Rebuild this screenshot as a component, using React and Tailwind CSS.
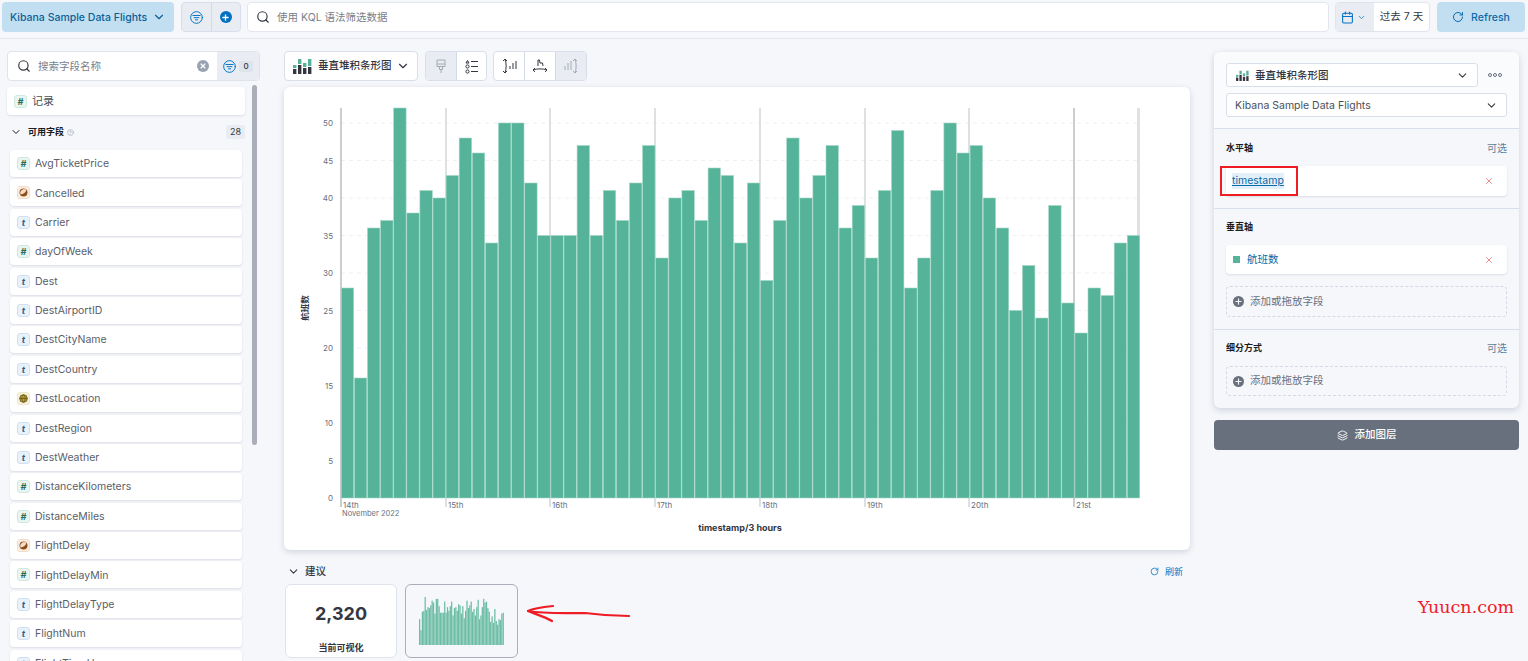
import React from 'react';
import { ChevronDown, Search, RotateCw, X, Layers, Calendar, Plus, HelpCircle } from 'lucide-react';

const CJK = 'font-["Inter","Noto_Sans_CJK_SC",sans-serif]';

const FIELDS = [
  ['AvgTicketPrice', 'n'], ['Cancelled', 'b'], ['Carrier', 't'], ['dayOfWeek', 'n'], ['Dest', 't'],
  ['DestAirportID', 't'], ['DestCityName', 't'], ['DestCountry', 't'], ['DestLocation', 'g'], ['DestRegion', 't'],
  ['DestWeather', 't'], ['DistanceKilometers', 'n'], ['DistanceMiles', 'n'], ['FlightDelay', 'b'],
  ['FlightDelayMin', 'n'], ['FlightDelayType', 't'], ['FlightNum', 't'], ['FlightTimeHour', 't'],
];

const BARS = [28, 16, 36, 37, 52, 38, 41, 40, 43, 48, 46, 34, 50, 50, 42, 35, 35, 35, 47, 35, 41, 37, 42, 47, 32, 40, 41, 37, 44, 43, 34, 42, 29, 37, 48, 40, 43, 47, 36, 39, 32, 41, 49, 28, 32, 41, 50, 46, 47, 40, 36, 25, 31, 24, 39, 26, 22, 28, 27, 34, 35];
const DAYS = ['14th', '15th', '16th', '17th', '18th', '19th', '20th', '21st'];
const DAY_X = [57, 162, 266, 371, 476, 581, 685, 790];
const TICKS = [0, 5, 10, 15, 20, 25, 30, 35, 40, 45, 50];

function FieldToken({ type }) {
  if (type === 'n') {
    return <span className="flex h-[13px] w-[13px] shrink-0 items-center justify-center rounded-[3px] border border-[#cfe9e0] bg-[#e8f5f1] text-[9px] font-bold italic leading-none text-[#2c6e5a]">#</span>;
  }
  if (type === 't') {
    return <span className="flex h-[13px] w-[13px] shrink-0 items-center justify-center rounded-[3px] border border-[#cfe0ef] bg-[#eaf2f9] text-[9px] font-bold italic leading-none text-[#2f5f8a]">t</span>;
  }
  if (type === 'b') {
    return (
      <span className="flex h-[13px] w-[13px] shrink-0 items-center justify-center rounded-[3px] border border-[#f6dcc6] bg-[#fbeee3]">
        <svg width="9" height="9" viewBox="0 0 9 9">
          <circle cx="4.5" cy="4.5" r="4" fill="#8f4f1c" />
          <path d="M1.5 6.5A4 4 0 0 1 7.5 1.8C7 4.5 4.5 6.2 1.5 6.5Z" fill="#f6dcc6" />
        </svg>
      </span>
    );
  }
  return (
    <span className="flex h-[13px] w-[13px] shrink-0 items-center justify-center rounded-[3px] border border-[#efe8c8] bg-[#f7f2dc]">
      <svg width="9" height="9" viewBox="0 0 9 9" fill="none" stroke="#6f5a12" strokeWidth="0.9">
        <circle cx="4.5" cy="4.5" r="3.8" fill="#b9a14a" />
        <path d="M0.7 4.5h7.6M4.5 0.7c-2.2 2.4-2.2 5.2 0 7.6M4.5 0.7c2.2 2.4 2.2 5.2 0 7.6" />
      </svg>
    </span>
  );
}

function FilterIcon({ size = 13, color = '#0071c2' }) {
  return (
    <svg width={size} height={size} viewBox="0 0 16 16" fill="none" stroke={color} strokeWidth="1.2" strokeLinecap="round">
      <circle cx="8" cy="8" r="7.2" />
      <path d="M3.5 5.5h9M5 8.2h6M6.6 10.9h2.8" />
    </svg>
  );
}

function BarStackIcon({ small }) {
  const s = small ? 'h-[11px] w-[13px]' : 'h-[16px] w-[19px]';
  return (
    <svg className={s} viewBox="0 0 19 16">
      <rect x="0" y="7" width="3.4" height="3" fill="#54b399" />
      <rect x="0" y="11" width="3.4" height="5" fill="#343741" />
      <rect x="5" y="1" width="3.4" height="5" fill="#54b399" />
      <rect x="5" y="7" width="3.4" height="9" fill="#343741" />
      <rect x="10" y="5" width="3.4" height="4" fill="#54b399" />
      <rect x="10" y="10" width="3.4" height="6" fill="#343741" />
      <rect x="15" y="1" width="3.4" height="7" fill="#54b399" />
      <rect x="15" y="9" width="3.4" height="7" fill="#343741" />
    </svg>
  );
}

function DropZone({ h }) {
  return (
    <div className={`flex ${h} items-center gap-[6px] rounded-[4px] border border-dashed border-[#d3dae6] px-[6px] text-[10.5px] text-[#69707d]`}>
      <span className="flex h-[11px] w-[11px] items-center justify-center rounded-full bg-[#69707d]">
        <Plus size={9} strokeWidth={3} className="text-[#f5f7fa]" />
      </span>
      添加或拖放字段
    </div>
  );
}

function SectionTitle({ children, optional }) {
  return (
    <div className="flex h-4 items-center justify-between">
      <span className="text-[9px] font-bold text-[#1a1c21]">{children}</span>
      {optional && <span className="text-[10px] text-[#5f7f98]">可选</span>}
    </div>
  );
}

function Chart() {
  return (
    <svg width="906" height="463" className="block">
      {TICKS.filter(t => t > 0).map(t => (
        <line key={t} x1="57" x2="856" y1={411 - t * 7.5} y2={411 - t * 7.5} stroke="#eef0f3" strokeDasharray="4 4" />
      ))}
      {DAY_X.map((x, i) => (
        <line key={x} x1={x} x2={x} y1="21" y2="420" stroke={i === 0 || i === 7 ? '#a9adb3' : '#c9cbd0'} strokeWidth="1.2" />
      ))}
      <rect x="853" y="21" width="3" height="390" fill="#e0e1e5" />
      {BARS.map((v, i) => (
        <rect key={i} x={57.3 + i * 13.1} y={411 - v * 7.5} width="12.4" height={v * 7.5} fill="#54b399" stroke="#a3d7c5" strokeWidth="0.6" />
      ))}
      <g className="text-[8px]" fill="#69707d" style={{ fontFamily: 'Inter, sans-serif' }}>
        {TICKS.map(t => (
          <text key={t} x="49" y={414 - t * 7.5} textAnchor="end">{t}</text>
        ))}
        {DAYS.map((d, i) => (
          <text key={d} x={DAY_X[i] + 2} y="421">{d}</text>
        ))}
        <text x="58" y="428.5" style={{ fontSize: '7.5px' }}>November 2022</text>
      </g>
      <text x="456" y="444" textAnchor="middle" fontSize="9" fontWeight="700" fill="#343741" style={{ fontFamily: 'Inter, sans-serif' }}>timestamp/3 hours</text>
      <text transform="translate(24 221) rotate(-90)" textAnchor="middle" fontSize="8.5" fontWeight="700" fill="#343741" style={{ fontFamily: 'Inter, "Noto Sans CJK SC", sans-serif' }}>航班数</text>
    </svg>
  );
}

function MiniChart() {
  return (
    <svg width="85" height="48" viewBox="0 0 61 52" preserveAspectRatio="none">
      {BARS.map((v, i) => (
        <rect key={i} x={i} y={52 - v} width="0.9" height={v} fill="#6bbda3" />
      ))}
    </svg>
  );
}

export default function App() {
  return (
    <div className={`relative h-[661px] w-[1528px] overflow-hidden bg-[#f6f7fb] ${CJK}`}>
      <header className="flex h-[39px] gap-[6px] border-b border-[#e3e6ef] pl-[2px] pr-[3px] pt-[2px]">
        <button className="mr-[1px] flex h-[30px] w-[172px] items-center justify-between whitespace-nowrap rounded-[4px] bg-[#c2dff2] pl-[8px] pr-[8px] text-[10.5px] font-medium text-[#0b5f97]">
          <span className="pt-[1px]">Kibana Sample Data Flights</span>
          <ChevronDown size={14} />
        </button>
        <div className="flex h-[30px] w-[60px] rounded-[4px] border border-[#d8deea] bg-[#e9edf3]">
          <span className="flex flex-1 items-center justify-center border-r border-[#d3dae6]"><FilterIcon /></span>
          <span className="flex flex-1 items-center justify-center">
            <span className="flex h-[12px] w-[12px] items-center justify-center rounded-full bg-[#0071c2]">
              <Plus size={9} strokeWidth={3.5} className="text-white" />
            </span>
          </span>
        </div>
        <div className="flex h-[30px] flex-1 items-center rounded-[4px] border border-[#e3e6ef] bg-white pl-[8px] text-[10.5px] text-[#7a808a]">
          <Search size={14} className="mr-[7px] text-[#343741]" />
          <span className="pt-[1px]">使用 KQL 语法筛选数据</span>
        </div>
        <div className="flex h-[30px] w-[95px] rounded-[4px] border border-[#e0e4ec] bg-white">
          <span className="flex w-[38px] items-center gap-[3px] rounded-l-[4px] bg-[#e9edf3] pl-[5px] text-[#0071c2]">
            <Calendar size={13} />
            <ChevronDown size={9} />
          </span>
          <span className="flex-1 self-center text-center text-[10.5px] text-[#343741]">过去 7 天</span>
        </div>
        <button className="ml-[1px] flex h-[30px] w-[88px] items-center justify-center gap-[7px] rounded-[4px] bg-[#c2dff2] text-[10.5px] font-medium text-[#0b6aa8]">
          <RotateCw size={12} />
          <span className="pt-[1px]">Refresh</span>
        </button>
      </header>

      <main className="flex">
        <aside className="relative w-[284px] shrink-0 pt-[12px]">
          <div className="ml-[7px] flex h-[30px] w-[253px] rounded-[4px] border border-[#dfe3ec] bg-white">
            <div className="flex flex-1 items-center pl-[9px] pr-[8px] text-[10.5px] text-[#7a808a]">
              <Search size={14} className="mr-[7px] text-[#343741]" />
              <span className="flex-1 pt-[1px]">搜索字段名称</span>
              <span className="flex h-[12px] w-[12px] items-center justify-center rounded-full bg-[#98a2b3]">
                <X size={8} strokeWidth={3.5} className="text-white" />
              </span>
            </div>
            <div className="flex w-[42px] items-center justify-center gap-[3px] rounded-r-[4px] bg-[#e9edf3]">
              <FilterIcon />
              <span className="rounded-[2px] bg-[#dfe4ec] px-[4px] text-[8px] font-medium leading-[11px] text-[#343741]">0</span>
            </div>
          </div>
          <div className="ml-[7px] mt-[6px] flex h-[28px] w-[238px] items-center gap-[5px] rounded-[4px] bg-white pl-[7px] text-[11px] text-[#4a4f58] shadow-[0_1px_2px_rgba(152,162,179,0.3)]">
            <FieldToken type="n" />
            记录
          </div>
          <div className="ml-[7px] mt-[10px] flex h-[14px] w-[238px] items-center pl-[3px] text-[9px] font-semibold text-[#1a1c21]">
            <ChevronDown size={12} className="mr-[6px]" />
            可用字段
            <HelpCircle size={7} className="ml-[3px] text-[#98a2b3]" />
            <span className="ml-auto rounded-[2px] bg-[#e9edf3] px-[4px] text-[9px] font-normal leading-[14px] text-[#343741]">28</span>
          </div>
          <ul className="ml-[10px] mt-[11px] w-[232px]">
            {FIELDS.map(([name, type]) => (
              <li key={name} className="mb-[2.4px] flex h-[27px] items-center gap-[5px] rounded-[4px] bg-white pl-[7px] text-[10.5px] text-[#5a6069] shadow-[0_1px_2px_rgba(152,162,179,0.3)]">
                <FieldToken type={type} />
                <span className="pt-[1px]">{name}</span>
              </li>
            ))}
          </ul>
          <div className="absolute left-[252px] top-[46px] h-[360px] w-[5px] rounded-full bg-[#a9aeb8]" />
        </aside>

        <section className="w-[906px] shrink-0 pt-[12px]">
          <div className="flex h-[30px] gap-[7px]">
            <button className="flex w-[134px] items-center rounded-[4px] border border-[#d8deea] bg-white pl-[8px] text-[10.5px] font-medium text-[#343741]">
              <BarStackIcon />
              <span className="ml-[6px] flex-1 text-left">垂直堆积条形图</span>
              <ChevronDown size={14} className="mr-[7px]" />
            </button>
            <div className="flex w-[62px] rounded-[4px] border border-[#d8deea] bg-white">
              <span className="flex flex-1 items-center justify-center rounded-l-[4px] border-r border-[#d3dae6] bg-[#e9edf3]">
                <svg width="12" height="15" viewBox="0 0 12 15" fill="none" stroke="#a4a9b3" strokeWidth="1">
                  <path d="M2 1h8v6.5H2zM2 5h8M4.5 7.5v3h3v-3M6 10.5V14" />
                </svg>
              </span>
              <span className="flex flex-1 items-center justify-center">
                <svg width="13" height="15" viewBox="0 0 13 15" fill="none" stroke="#343741" strokeWidth="1">
                  <circle cx="2.5" cy="7.5" r="1.6" />
                  <circle cx="2.5" cy="12.5" r="1.6" />
                  <path d="M1 4l1.5-2.5L4 4zM6 2.5h7M6 7.5h7M6 12.5h7" />
                </svg>
              </span>
            </div>
            <div className="ml-[-1px] flex w-[94px] rounded-[4px] border border-[#d8deea] bg-white">
              <span className="flex flex-1 items-center justify-center border-r border-[#d3dae6]">
                <svg width="16" height="16" viewBox="0 0 16 16" fill="none" stroke="#343741" strokeWidth="1">
                  <path d="M4 1C5.5 5 5.5 11 4 15M2 3l2-2 2 2M2 13l2 2 2-2M9 11V8M12 11V5M15 11V3" />
                </svg>
              </span>
              <span className="flex flex-1 items-center justify-center border-r border-[#d3dae6]">
                <svg width="16" height="16" viewBox="0 0 16 16" fill="none" stroke="#343741" strokeWidth="1">
                  <path d="M1 12C5 10.5 11 10.5 15 12M3 10l-2 2 2 2M13 10l2 2-2 2M6 8V2h1.5L8 5h2.5L11 8" />
                </svg>
              </span>
              <span className="flex flex-1 items-center justify-center rounded-r-[4px] bg-[#e9edf3]">
                <svg width="16" height="16" viewBox="0 0 16 16" fill="none" stroke="#a4a9b3" strokeWidth="1">
                  <path d="M12 1C13.5 5 13.5 11 12 15M10 3l2-2 2 2M10 13l2 2 2-2M2 12V8M5 12V5M8 12V3" />
                </svg>
              </span>
            </div>
          </div>

          <div className="mt-[6px] h-[463px] rounded-[6px] bg-white shadow-[0_2px_6px_rgba(152,162,179,0.4)]">
            <Chart />
          </div>

          <div className="flex h-[34px] items-center pl-[3px] pr-[7px] pt-[9px] text-[10.5px] font-medium text-[#343741]">
            <ChevronDown size={13} className="mr-[5px]" />
            建议
            <span className="ml-auto flex items-center gap-[6px] text-[9px] font-normal text-[#0071c2]">
              <RotateCw size={9} />
              刷新
            </span>
          </div>
          <div className="flex gap-[8px] pl-[1px]">
            <div className="flex h-[74px] w-[112px] flex-col items-center rounded-[6px] border border-[#dfe3ec] bg-white">
              <span className="mt-[16px] text-[18px] font-bold leading-[26px] text-[#343741]">2,320</span>
              <span className="mt-auto mb-[3px] text-[9px] font-semibold text-[#343741]">当前可视化</span>
            </div>
            <div className="flex h-[74px] w-[113px] items-center justify-center rounded-[6px] border border-[#a9aeb8] bg-[#f5f7fa]">
              <MiniChart />
            </div>
          </div>
        </section>

        <section className="ml-[24px] w-[305px] shrink-0 pt-[13px]">
          <div className="rounded-[6px] bg-[#f6f7fb] shadow-[0_2px_6px_rgba(152,162,179,0.45)]">
            <div className="rounded-t-[6px] border-b border-[#d8deea] bg-[#fafbfd] px-[12px] pb-[11px] pt-[11px]">
              <div className="flex items-center">
                <div className="flex h-[24px] w-[252px] items-center rounded-[3px] border border-[#d8deea] bg-white pl-[9px] pr-[8px] text-[10.5px] font-medium text-[#343741]">
                  <BarStackIcon small />
                  <span className="ml-[6px] flex-1 pt-[1px]">垂直堆积条形图</span>
                  <ChevronDown size={13} />
                </div>
                <span className="ml-[10px] flex gap-[1px]">
                  <i className="h-[4px] w-[4px] rounded-full border border-[#69707d]" />
                  <i className="h-[4px] w-[4px] rounded-full border border-[#69707d]" />
                  <i className="h-[4px] w-[4px] rounded-full border border-[#69707d]" />
                </span>
              </div>
              <div className="mt-[6px] flex h-[24px] items-center justify-between rounded-[3px] border border-[#d8deea] bg-white pl-[8px] pr-[8px] text-[10.5px] text-[#4a4f58]">
                <span className="pt-[1px]">Kibana Sample Data Flights</span>
                <ChevronDown size={13} className="text-[#343741]" />
              </div>
            </div>

            <div className="border-b border-[#d8deea] px-[12px] pb-[12px] pt-[11px]">
              <SectionTitle optional>水平轴</SectionTitle>
              <div className="relative mt-[10px] flex h-[30px] items-center justify-between rounded-[4px] bg-white pl-[6px] pr-[13px] shadow-[0_1px_2px_rgba(152,162,179,0.3)]">
                <span className="bg-[#e3f0fa] text-[10.5px] text-[#0b6aa8] underline">timestamp</span>
                <X size={10} strokeWidth={1.6} className="text-[#dc5850]" />
                <div className="absolute -left-[6px] top-0 h-[30px] w-[78px] border-2 border-[#f01c24]" />
              </div>
            </div>

            <div className="border-b border-[#d8deea] px-[12px] pb-[12px] pt-[10px]">
              <SectionTitle>垂直轴</SectionTitle>
              <div className="mt-[10px] flex h-[29px] items-center rounded-[4px] bg-white pl-[7px] pr-[13px] shadow-[0_1px_2px_rgba(152,162,179,0.3)]">
                <span className="h-[7px] w-[7px] bg-[#54b399]" />
                <span className="ml-[7px] flex-1 text-[10.5px] text-[#0b6aa8]">航班数</span>
                <X size={10} strokeWidth={1.6} className="text-[#dc5850]" />
              </div>
              <div className="mt-[12px]"><DropZone h="h-[31px]" /></div>
            </div>

            <div className="px-[12px] pb-[12px] pt-[10px]">
              <SectionTitle optional>细分方式</SectionTitle>
              <div className="mt-[10px]"><DropZone h="h-[30px]" /></div>
            </div>
          </div>
          <button className="mt-[12px] flex h-[30px] w-full items-center justify-center gap-[7px] rounded-[4px] bg-[#69707d] text-[10.5px] font-medium text-white">
            <Layers size={11} />
            添加图层
          </button>
        </section>
      </main>

      <svg className="absolute left-[525px] top-[600px]" width="110" height="26" fill="none" stroke="#ee1c25" strokeWidth="2.2" strokeLinecap="round" strokeLinejoin="round">
        <path d="M28 6C18 7 9 8 3 11C10 14 20 17 27 21" />
        <path d="M3 11C20 14 40 13 60 13C75 15 90 16 104 16" />
      </svg>
      <span className="absolute left-[1418px] top-[597px] text-[17.5px] leading-[20px] text-[#f01c2c] [font-family:'DejaVu_Serif',serif]">Yuucn.com</span>
    </div>
  );
}
